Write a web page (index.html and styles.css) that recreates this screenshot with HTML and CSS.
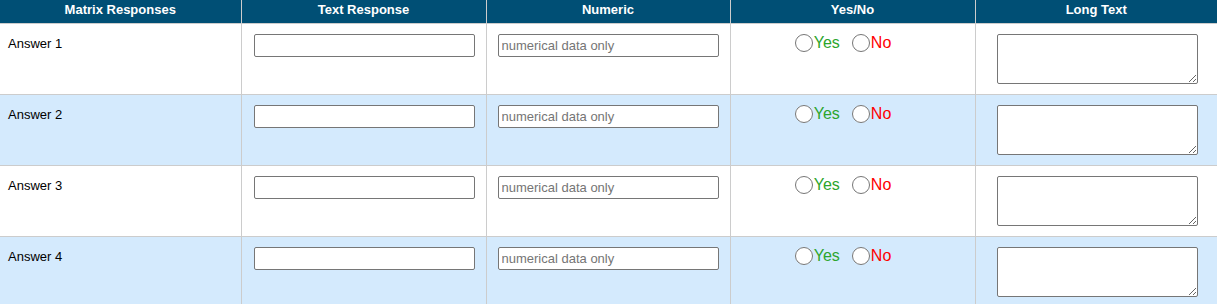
FILE: index.html
```html
<!DOCTYPE html>
<html lang="en">
<head>
    <meta charset="UTF-8">
    <title>Matrix Responses</title>
    <link rel="stylesheet" href="styles.css">
</head>
<body>
    <table class="matrix">
        <colgroup>
            <col class="col-a">
            <col class="col-b">
            <col class="col-c">
            <col class="col-d">
            <col class="col-e">
        </colgroup>
        <thead>
            <tr>
                <th>Matrix Responses</th>
                <th>Text Response</th>
                <th>Numeric</th>
                <th>Yes/No</th>
                <th>Long Text</th>
            </tr>
        </thead>
        <tbody>
            <tr>
                <td class="label">Answer 1</td>
                <td class="center"><input type="text" class="field text-field"></td>
                <td class="center"><input type="text" class="field" placeholder="numerical data only"></td>
                <td class="center">
                    <div class="yesno">
                        <label class="yes"><input type="radio" name="q1">Yes</label>
                        <label class="no"><input type="radio" name="q1">No</label>
                    </div>
                </td>
                <td><textarea class="long"></textarea></td>
            </tr>
            <tr class="alt">
                <td class="label">Answer 2</td>
                <td class="center"><input type="text" class="field text-field"></td>
                <td class="center"><input type="text" class="field" placeholder="numerical data only"></td>
                <td class="center">
                    <div class="yesno">
                        <label class="yes"><input type="radio" name="q2">Yes</label>
                        <label class="no"><input type="radio" name="q2">No</label>
                    </div>
                </td>
                <td><textarea class="long"></textarea></td>
            </tr>
            <tr>
                <td class="label">Answer 3</td>
                <td class="center"><input type="text" class="field text-field"></td>
                <td class="center"><input type="text" class="field" placeholder="numerical data only"></td>
                <td class="center">
                    <div class="yesno">
                        <label class="yes"><input type="radio" name="q3">Yes</label>
                        <label class="no"><input type="radio" name="q3">No</label>
                    </div>
                </td>
                <td><textarea class="long"></textarea></td>
            </tr>
            <tr class="alt">
                <td class="label">Answer 4</td>
                <td class="center"><input type="text" class="field text-field"></td>
                <td class="center"><input type="text" class="field" placeholder="numerical data only"></td>
                <td class="center">
                    <div class="yesno">
                        <label class="yes"><input type="radio" name="q4">Yes</label>
                        <label class="no"><input type="radio" name="q4">No</label>
                    </div>
                </td>
                <td><textarea class="long"></textarea></td>
            </tr>
        </tbody>
    </table>
</body>
</html>
```

FILE: styles.css
```css
body {
    margin: 0;
    font-family: 'Liberation Sans', Arial, sans-serif;
    font-size: 13px;
    color: #000;
    background: #fff;
}

.matrix {
    width: 1217px;
    border-collapse: collapse;
    table-layout: fixed;
}

.col-a { width: 241px; }
.col-b { width: 245px; }
.col-c { width: 244px; }
.col-d { width: 245px; }
.col-e { width: 242px; }

.matrix th {
    background: #004f75;
    color: #fff;
    font-weight: bold;
    font-size: 13px;
    height: 21px;
    padding: 2px 0 0;
    line-height: 16px;
    vertical-align: top;
    border-left: 1px solid #ccc;
    border-bottom: 1px solid #ccc;
}

.matrix th:first-child,
.matrix td:first-child {
    border-left: none;
}

.matrix td {
    padding: 10px 0;
    vertical-align: top;
    border-left: 1px solid #ccc;
    border-bottom: 1px solid #ccc;
}

.matrix tr.alt td {
    background: #d4eafd;
}

.matrix td.label {
    padding: 12px 0 0 8px;
    line-height: 15px;
}

.center {
    text-align: center;
}

.field {
    box-sizing: border-box;
    width: 221px;
    height: 23px;
    margin: 0;
    padding: 1px 3px;
    border: 1px solid #767676;
    border-radius: 2px;
    font-family: 'Liberation Sans', Arial, sans-serif;
    font-size: 13px;
    background: #fff;
    vertical-align: top;
}

.text-field {
    margin-left: 2px;
}

.field::placeholder {
    color: #757575;
}

.long {
    box-sizing: border-box;
    display: block;
    width: 201px;
    height: 50px;
    margin: 0 0 0 21px;
    padding: 2px;
    border: 1px solid #767676;
    border-radius: 2px;
    background: #fff;
}

.yesno {
    display: inline-flex;
    gap: 12px;
    padding-right: 19px;
    margin-top: -1px;
    font-size: 16px;
    line-height: 20px;
}

.yesno label {
    display: inline-flex;
    align-items: center;
}

.yesno input {
    width: 18px;
    height: 18px;
    margin: 0 1px 0 0;
}

.yes {
    color: #2ca52c;
}

.no {
    color: #f00;
}
```
